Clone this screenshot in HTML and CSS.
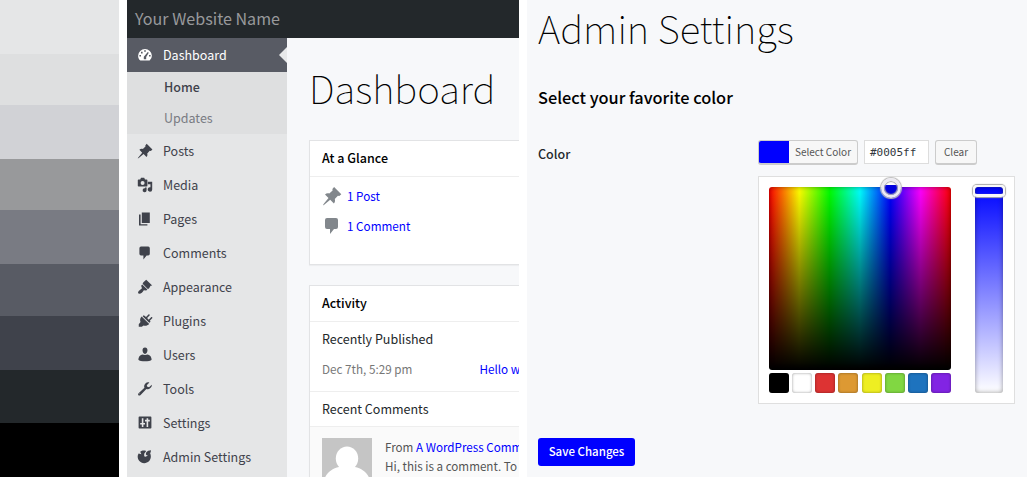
FILE: index.html
```html
<!DOCTYPE html>
<html lang="en">
<head>
<meta charset="utf-8">
<title>Admin Settings</title>
<link rel="stylesheet" href="styles.css">
</head>
<body>
<svg class="defs" aria-hidden="true">
  <symbol id="pin" viewBox="0 0 20 20"><path d="M10.4 3.100l1.700-2.100 7.200 7.200-2 1.800-1.400-.2-3.100 3.300c.5 1.700.2 3.200-.9 4.400l-3.700-3.700-6 4.900-1.300.7.7-1.300 4.900-6L3 8.500c1.200-1.200 2.700-1.500 4.300-1l3.300-3z"/></symbol>
  <symbol id="comment" viewBox="0 0 20 20"><path d="M5 2h9a2 2 0 0 1 2 2v7a2 2 0 0 1-2 2h-2l-4 5v-5H5a2 2 0 0 1-2-2V4a2 2 0 0 1 2-2z"/></symbol>
</svg>
<div class="board">
  <div class="palette">
    <div class="tone tone-1"></div><div class="tone tone-2"></div><div class="tone tone-3"></div>
    <div class="tone tone-4"></div><div class="tone tone-5"></div><div class="tone tone-6"></div>
    <div class="tone tone-7"></div><div class="tone tone-8"></div><div class="tone tone-9"></div>
  </div>

  <div class="admin">
    <header class="topbar">Your Website Name</header>
    <div class="admin-body">
      <nav class="menu">
        <div class="item current">
          <svg viewBox="0 0 20 20"><path fill-rule="evenodd" d="M10 2.500a8.600 8.600 0 0 0-8.600 8.300c0 2.500 1 4.800 2.800 6.200h11.600a8.300 8.300 0 0 0 2.800-6.200 8.600 8.600 0 0 0-8.600-8.300zM9 4h2v2H9zM5 6h2v2H5zM3 10h2v2H3zM15 10h2v2h-2zM13.500 6.200l1.200.9-3.200 5.400v2.800h-3v-3z"/></svg>
          <span>Dashboard</span><i class="notch"></i>
        </div>
        <div class="submenu"><div class="sub active">Home</div><div class="sub">Updates</div></div>
        <div class="item"><svg><use href="#pin"/></svg><span>Posts</span></div>
        <div class="item"><svg viewBox="0 0 20 20"><path fill-rule="evenodd" d="M2 3h2l1-2h4l1 2h2a1 1 0 0 1 1 1v7a1 1 0 0 1-1 1H2a1 1 0 0 1-1-1V4a1 1 0 0 1 1-1zm5 2a2.500 2.500 0 1 0 0 5 2.500 2.500 0 0 0 0-5z"/><path d="M13.500 6H19v9.500a2.800 2.800 0 1 1-2.200-2.700V9h-3.300zM12 13v3.500a2.500 2.500 0 1 1-2-2.500V13z"/></svg><span>Media</span></div>
        <div class="item"><svg viewBox="0 0 20 20"><path d="M6 2h10v13H6zM2.500 4.500h2V16.500H13V18H2.500z"/></svg><span>Pages</span></div>
        <div class="item"><svg><use href="#comment"/></svg><span>Comments</span></div>
        <div class="item"><svg viewBox="0 0 20 20"><path d="M8 4l3.500-3L19 8l-2 .5-2 3.500-1.500.5L7 6zM6.500 7l6.500 6-1.500 1.500-3-.5c-1 2-3.500 4.500-5.500 4.500S.800 16.500 2.200 15l4-3.500-1-3z"/></svg><span>Appearance</span></div>
        <div class="item"><svg viewBox="0 0 20 20"><path d="M11.300 5l3-3.200c1-.9 2.300.4 1.400 1.400l-3 3.200 1.900 1.900 3-3c1-.9 2.300.4 1.400 1.400l-3 3.100 1 1-1.700 1.500L7 4.200l1.500-1.500zM5.800 4.500l9.500 9.300c-2 2-4.600 2.600-7 1.900L6 17.300H2.200V14.200l2.200-2.800c-1-2.500-.5-5 1.400-6.900z"/></svg><span>Plugins</span></div>
        <div class="item"><svg viewBox="0 0 20 20"><path d="M10 .5c2.100 0 3.100 1.400 3.100 3.600S11.900 8.700 10 8.700 6.900 6.300 6.900 4.100 7.900.5 10 .5zM6.500 9.300L10 10l3.500-.7c2.900.7 4.800 3.200 4.800 6.700-2 2.500-14.600 2.500-16.600 0 0-3.500 1.900-6 4.800-6.700z"/></svg><span>Users</span></div>
        <div class="item"><svg viewBox="0 0 20 20"><path fill-rule="evenodd" d="M16.700 8.700c-1.400 1.400-3.400 1.800-5 1.200L4.500 17.500c-2 2-4.300-.6-2.500-2.300l7.300-6.800c-.8-2-.2-4 1.200-5.400C12 1.600 14 1.300 15.500 2l-3.300 3.300.7 2 2.200.6 3.300-3.300c.5 1.400-.3 2.900-1.700 4.100zM3.700 15.400a.6.6 0 1 0 .1 1.200z"/></svg><span>Tools</span></div>
        <div class="item"><svg viewBox="0 0 20 20"><path fill-rule="evenodd" d="M3 2h14a1 1 0 0 1 1 1v13a1 1 0 0 1-1 1H3a1 1 0 0 1-1-1V3a1 1 0 0 1 1-1zM6 4v6H4v2h2v3h2v-3h2v-2H8V4zM12 4v2h-2v2h2v7h2V8h2V6h-2V4z"/></svg><span>Settings</span></div>
        <div class="item"><svg viewBox="0 0 20 20"><path d="M4 3.500c2-1.800 5-2 7.500-1L9 6v3c1 .8 2.200.7 3 0l4.300-4c3 6.500-1 12.700-7.300 12.700C2 17.700-1 10 2 5.500l3.500 1.200z"/><path d="M11.500 4.500c1.400-2 3.500-3 6-3-.2 2.500-1.200 4.500-3 6l-2.500.2-1-1z"/></svg><span>Admin Settings</span></div>
      </nav>
      <main class="content">
        <h1>Dashboard</h1>
        <section class="box glance">
          <h2>At a Glance</h2>
          <div class="glance-list">
            <a><svg><use href="#pin"/></svg>1 Post</a>
            <a><svg><use href="#comment"/></svg>1 Comment</a>
          </div>
        </section>
        <section class="box">
          <h2>Activity</h2>
          <div class="published">
            <h3>Recently Published</h3>
            <div class="entry"><span>Dec 7th, 5:29 pm</span><a>Hello w</a></div>
          </div>
          <h3 class="comments-title">Recent Comments</h3>
          <div class="comment-row">
            <svg class="avatar" viewBox="0 0 50 50"><path fill="#c5c5c5" d="M0 0h50v50H0z"/><ellipse cx="25" cy="20.500" rx="11.200" ry="12"/><path d="M17 29c-9 2-16 8-16 21h48c0-13-7-19-16-21z"/></svg>
            <div class="comment-text"><div class="by">From <a>A WordPress Comm</a></div><div>Hi, this is a comment. To</div></div>
          </div>
        </section>
      </main>
    </div>
  </div>

  <div class="settings">
    <h1>Admin Settings</h1>
    <h2>Select your favorite color</h2>
    <div class="field">
      <label>Color</label>
      <div class="picker">
        <div class="controls">
          <div class="button select"><i></i><span>Select Color</span></div>
          <div class="hex">#0005ff</div>
          <div class="button clear">Clear</div>
        </div>
        <div class="panel">
          <div class="left">
            <div class="square"><i class="handle"></i></div>
            <div class="swatches"><i class="sw black"></i><i class="sw white"></i><i class="sw red"></i><i class="sw orange"></i><i class="sw yellow"></i><i class="sw green"></i><i class="sw blue"></i><i class="sw purple"></i></div>
          </div>
          <div class="strip"><i class="slider"></i></div>
        </div>
      </div>
    </div>
    <div class="save">Save Changes</div>
  </div>
</div>
</body>
</html>
```
FILE: styles.css
```css
* { box-sizing: border-box; }
body { margin: 0; background: #fff; color: #23282d; font: 12.5px/18px "Noto Sans CJK SC", "Open Sans", sans-serif; }
h1, h2, h3 { margin: 0; color: #000; }
a { color: #00f; }
svg { fill: currentColor; display: block; flex: none; }
.defs { position: absolute; width: 0; height: 0; }
.board { display: flex; gap: 8px; width: 1027px; height: 477px; overflow: hidden; }

.palette { width: 119px; display: grid; grid-template-rows: 54px 51px 54px 51px 54px 52px 54px 53px 54px; }
.tone-1 { background: #e5e6e7; }
.tone-2 { background: #dedfe0; }
.tone-3 { background: #d1d2d6; }
.tone-4 { background: #98999b; }
.tone-5 { background: #797b83; }
.tone-6 { background: #585b64; }
.tone-7 { background: #3f424b; }
.tone-8 { background: #23282b; }
.tone-9 { background: #000; }

.admin { width: 392px; overflow: hidden; background: #f7f8fa; }
.topbar { height: 38px; padding-left: 8px; background: #23282b; color: #98999b; font-size: 16.100px; line-height: 37px; }
.admin-body { display: flex; height: 439px; }
.menu { width: 160px; flex: none; background: #e5e6e7; color: #3f424b; }
.item { position: relative; display: flex; align-items: center; gap: 10px; height: 34px; padding-left: 10px; }
.item svg { width: 16px; height: 16px; }
.current { background: #585b64; color: #fff; }
.notch { position: absolute; right: 0; top: 9px; border: 8px solid transparent; border-left-width: 0; border-right-color: #e8e9ea; }
.submenu { height: 62px; background: #dedfe0; }
.sub { height: 31px; padding-left: 37px; line-height: 29px; color: #797b83; }
.active { color: #3f424b; font-weight: 500; }

.content { width: 232px; padding: 23px 0 0 22px; }
.content h1 { height: 79px; line-height: 52px; }
h1 { font-size: 38.600px; font-weight: 100; white-space: nowrap; }
.box { width: 446px; border: 1px solid #e2e3e5; background: #fff; box-shadow: 0 1px 1px rgba(0,0,0,.04); }
.box h2 { height: 36px; padding-left: 12px; border-bottom: 1px solid #eee; font-size: 12.500px; line-height: 33px; font-weight: 500; }
.glance { height: 125px; margin-bottom: 20px; }
.glance-list { padding: 4px 12px; font-size: 11.700px; }
.glance-list a { display: flex; gap: 5px; align-items: center; height: 30px; line-height: 18px; }
.glance-list svg { width: 20px; height: 20px; color: #82878c; }
.box h3 { font-size: 12.500px; font-weight: 400; color: #23282b; }
.published { height: 70px; padding: 8px 12px 0; border-bottom: 1px solid #eee; }
.entry { display: grid; grid-template-columns: 157.500px auto; padding-top: 12px; font-size: 11.700px; line-height: 17px; color: #777; }
.box .comments-title { height: 35px; line-height: 33px; padding-left: 12px; border-bottom: 1px solid #eee; }
.comment-row { display: flex; gap: 13px; padding: 11px 12px; background: #fafafa; height: 90px; font-size: 11.650px; line-height: 19px; color: #555; white-space: nowrap; }
.comment-text { margin-top: -1px; }
.avatar { width: 50px; height: 50px; color: #fff; }

.settings { width: 500px; background: #f7f8fa; padding: 1px 0 0 11px; }
.settings h1 { line-height: 52px; height: 86px; }
.settings h2 { font-size: 16.350px; font-weight: 500; line-height: 20px; height: 53px; }
.field { display: grid; grid-template-columns: 220px 257px; height: 298px; }
.field label { line-height: 28px; font-weight: 500; }
.controls { display: flex; gap: 6px; height: 36px; }
.button { height: 25px; border: 1px solid #ccc; border-bottom-width: 2px; border-radius: 3px; background: #f7f7f7; color: #555; font-size: 10px; line-height: 22px; text-align: center; }
.select { width: 100px; display: flex; overflow: hidden; }
.select i { width: 30px; background: #00f; }
.select span { flex: 1; }
.hex { width: 65px; height: 24px; border: 1px solid #ddd; background: #fff; padding-left: 5px; font: 11px/23px "DejaVu Sans Mono", monospace; color: #32373c; }
.clear { width: 42px; }
.panel { width: 257px; height: 228px; padding: 10px 11px 10px 10px; display: flex; justify-content: space-between; border: 1px solid #dfdfdf; background: #fff; }
.square { position: relative; width: 182px; height: 183px; border-radius: 3px; background: linear-gradient(to bottom, transparent, #000), linear-gradient(to right, #f00, #ff0 16.670%, #0f0 33.330%, #0ff 50%, #00f 66.670%, #f0f 83.330%, #f00); box-shadow: inset 0 0 5px rgba(0,0,0,.4); }
.handle { position: absolute; left: 112px; top: -9px; width: 20px; height: 20px; border: 3px solid #eceaf0; border-radius: 50%; background: linear-gradient(#fff 0 4px, #00d 4px); background-origin: padding-box; box-shadow: 0 0 1px 1px #bbb, inset 0 0 1px 1px #aaa; }
.swatches { display: flex; justify-content: space-between; margin-top: 3px; }
.sw { width: 20px; height: 20px; border-radius: 3px; box-shadow: inset 0 0 3px rgba(0,0,0,.4); }
.black { background: #000; }
.white { background: #fff; }
.red { background: #d33; }
.orange { background: #d93; }
.yellow { background: #ee2; }
.green { background: #81d742; }
.blue { background: #1e73be; }
.purple { background: #8224e3; }
.strip { position: relative; width: 28px; height: 206px; border-radius: 3px; background: linear-gradient(#0005ff, #fff); box-shadow: inset 0 0 5px rgba(0,0,0,.4); }
.slider { position: absolute; left: -2px; top: -2px; width: 32px; height: 12px; border: 3px solid #f8f8f8; border-width: 2px 2px 3px; border-radius: 4px; box-shadow: 0 0 1px 1px #aaa, inset 0 0 1px #777; }
.save { width: 97px; height: 28px; border-radius: 3px; background: #00f; color: #fff; text-align: center; line-height: 27px; font-weight: 500; font-size: 11.500px; }
```
